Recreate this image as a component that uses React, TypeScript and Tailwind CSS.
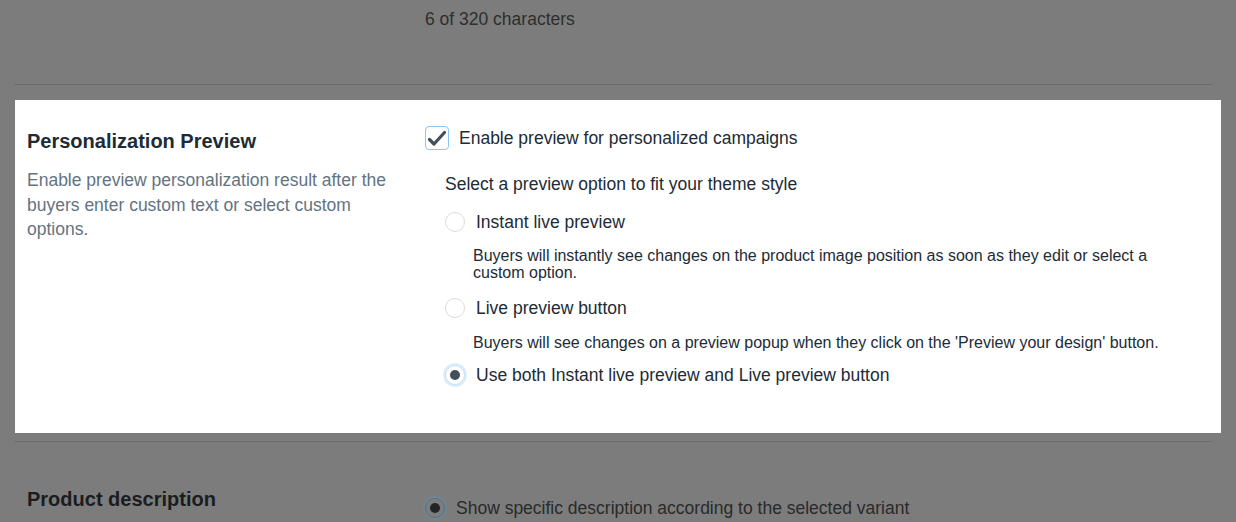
import React from "react";

function Radio({ checked, dim }: { checked?: boolean; dim?: boolean }) {
  if (checked) {
    return (
      <span
        className={
          dim
            ? "flex h-[20px] w-[20px] shrink-0 items-center justify-center rounded-full border border-[#5a6f80] bg-[#7d7d7d] shadow-[0_0_0_2px_#6f8594]"
            : "flex h-[20px] w-[20px] shrink-0 items-center justify-center rounded-full border border-[#c4dff5] bg-white shadow-[0_0_0_2px_#dbeefc]"
        }
      >
        <span className={dim ? "h-[10px] w-[10px] rounded-full bg-[#222528]" : "h-[10px] w-[10px] rounded-full bg-[#454f5b]"} />
      </span>
    );
  }
  return <span className="h-[20px] w-[20px] shrink-0 rounded-full border border-[#dcdcdc] bg-white" />;
}

export default function App() {
  return (
    <div
      className="h-[522px] w-full overflow-hidden bg-[#7c7c7c]"
      style={{ fontFamily: '"Liberation Sans", Arial, sans-serif' }}
    >
      {/* top remnant */}
      <div className="pl-[425px] pt-[9px] text-[17.5px] leading-[20px] text-[#2e2e2e]">6 of 320 characters</div>
      <div className="ml-[14px] mr-[24px] mt-[55px] border-t border-[#6c6c6c]" />

      {/* highlighted panel */}
      <div className="ml-[15px] mr-[15px] mt-[15px] flex h-[333px] bg-white pt-[25px]">
        <div className="w-[410px] shrink-0 pl-[12px] pr-[28px]">
          <h2 className="mt-[5px] text-[20px] font-bold leading-[22px] text-[#212b36]">Personalization Preview</h2>
          <p className="mt-[16px] text-[17.5px] leading-[24.5px] text-[#637381]">
            Enable preview personalization result after the buyers enter custom text or select custom options.
          </p>
        </div>
        <div className="flex-1 pr-[46px] pt-[1px] text-[#212b36]">
          <div className="flex items-center">
            <span className="flex h-[24px] w-[24px] shrink-0 items-center justify-center rounded-[4px] border border-[#8cc6f2] bg-white">
              <svg width="20" height="18" viewBox="0 0 20 18">
                <path d="M2.5 10.5 L7 15 L17.5 3.5" fill="none" stroke="#454f5b" strokeWidth="3.2" strokeLinecap="round" strokeLinejoin="round" />
              </svg>
            </span>
            <span className="ml-[10px] text-[17.5px] leading-[24px]">Enable preview for personalized campaigns</span>
          </div>

          <div className="pl-[20px]">
            <div className="mt-[24px] text-[17.5px] leading-[20px]">Select a preview option to fit your theme style</div>

            <div className="mt-[16px] flex h-[24px] items-center">
              <Radio />
              <span className="ml-[11px] text-[17.5px] leading-[24px]">Instant live preview</span>
            </div>
            <p className="ml-[28px] mt-[12.5px] text-[16px] leading-[17px]">
              Buyers will instantly see changes on the product image position as soon as they edit or select a custom option.
            </p>

            <div className="mt-[15.5px] flex h-[24px] items-center">
              <Radio />
              <span className="ml-[11px] text-[17.5px] leading-[24px]">Live preview button</span>
            </div>
            <p className="ml-[28px] mt-[13.5px] text-[16px] leading-[17px]">
              Buyers will see changes on a preview popup when they click on the 'Preview your design' button.
            </p>

            <div className="mt-[12.5px] flex h-[24px] items-center">
              <Radio checked />
              <span className="ml-[11px] text-[17.5px] leading-[24px]">Use both Instant live preview and Live preview button</span>
            </div>
          </div>
        </div>
      </div>

      <div className="ml-[14px] mr-[24px] mt-[8px] border-t border-[#6c6c6c]" />

      {/* bottom remnant */}
      <div className="flex pt-[46px]">
        <div className="w-[425px] shrink-0 pl-[27px] text-[20px] font-bold leading-[22px] text-[#1a1d20]">
          Product description
        </div>
        <div className="mt-[-3px] flex h-[24px] items-start">
          <div className="mt-[13px] flex items-center">
            <Radio checked dim />
            <span className="ml-[11px] text-[17.5px] leading-[20px] text-[#2a2a2a]">
              Show specific description according to the selected variant
            </span>
          </div>
        </div>
      </div>
    </div>
  );
}
